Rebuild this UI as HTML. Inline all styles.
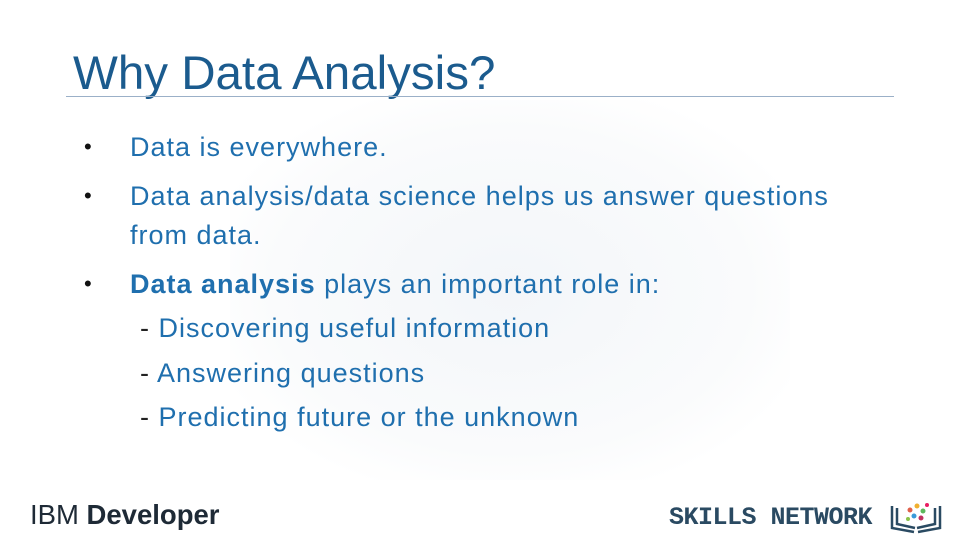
<!DOCTYPE html>
<html><head><meta charset="utf-8"><style>
body{margin:0;width:960px;height:540px;background:#fff;position:relative;overflow:hidden;font-family:"Liberation Sans",sans-serif}
.t{position:absolute;white-space:nowrap}
.title{left:73px;top:46px;font-size:47.5px;color:#1b5b8e}
.rule{position:absolute;left:66px;top:96px;width:828px;height:1px;background:#9bb0c8}
.b{color:#1f6fae;font-size:27px;letter-spacing:1px}
.dot{position:absolute;color:#111;font-size:22px}
.bg{position:absolute;left:230px;top:100px;width:560px;height:380px;background:radial-gradient(ellipse at center,#f3f6f9 0%,#fafbfc 60%,#fff 80%)}
</style></head><body>
<div class="bg"></div>
<div class="t title">Why Data Analysis?</div>
<div class="rule"></div>
<div class="dot" style="left:84px;top:134px">•</div>
<div class="t b" style="left:130px;top:132px">Data is everywhere.</div>
<div class="dot" style="left:84px;top:183px">•</div>
<div class="t b" style="left:130px;top:181px">Data analysis/data science helps us answer questions</div>
<div class="t b" style="left:130px;top:220px">from data.</div>
<div class="dot" style="left:84px;top:271px">•</div>
<div class="t b" style="left:130px;top:269px"><b>Data analysis</b> plays an important role in:</div>
<div class="t b" style="left:140px;top:313px"><span style="color:#222">-</span> Discovering useful information</div>
<div class="t b" style="left:140px;top:358px"><span style="color:#222">-</span> Answering questions</div>
<div class="t b" style="left:140px;top:402px"><span style="color:#222">-</span> Predicting future or the unknown</div>
<div class="t" style="left:30px;top:499px;font-size:27.5px;color:#1e2a36">IBM <b>Developer</b></div>
<div class="t" style="left:669px;top:503px;font-size:25px;font-weight:bold;color:#2a4a62;font-family:'Liberation Mono',monospace;letter-spacing:-0.5px">SKILLS NETWORK</div>
<svg style="position:absolute;left:888px;top:500px" width="56" height="34" viewBox="0 0 56 34">
<path d="M4 6v22l22 4M52 6v22l-22 4M9 8v16l18 4M47 8v16l-18 4" stroke="#2a4a62" stroke-width="2.5" fill="none"/>
<circle cx="22" cy="10" r="2.5" fill="#e0604a"/><circle cx="29" cy="6" r="2.5" fill="#f0b030"/><circle cx="35" cy="11" r="2.5" fill="#5cb85c"/><circle cx="26" cy="16" r="2.5" fill="#3a9ad9"/><circle cx="33" cy="18" r="2.5" fill="#c03060"/><circle cx="20" cy="19" r="2" fill="#8bc34a"/><circle cx="39" cy="5" r="2" fill="#e91e63"/>
</svg>
</body></html>
